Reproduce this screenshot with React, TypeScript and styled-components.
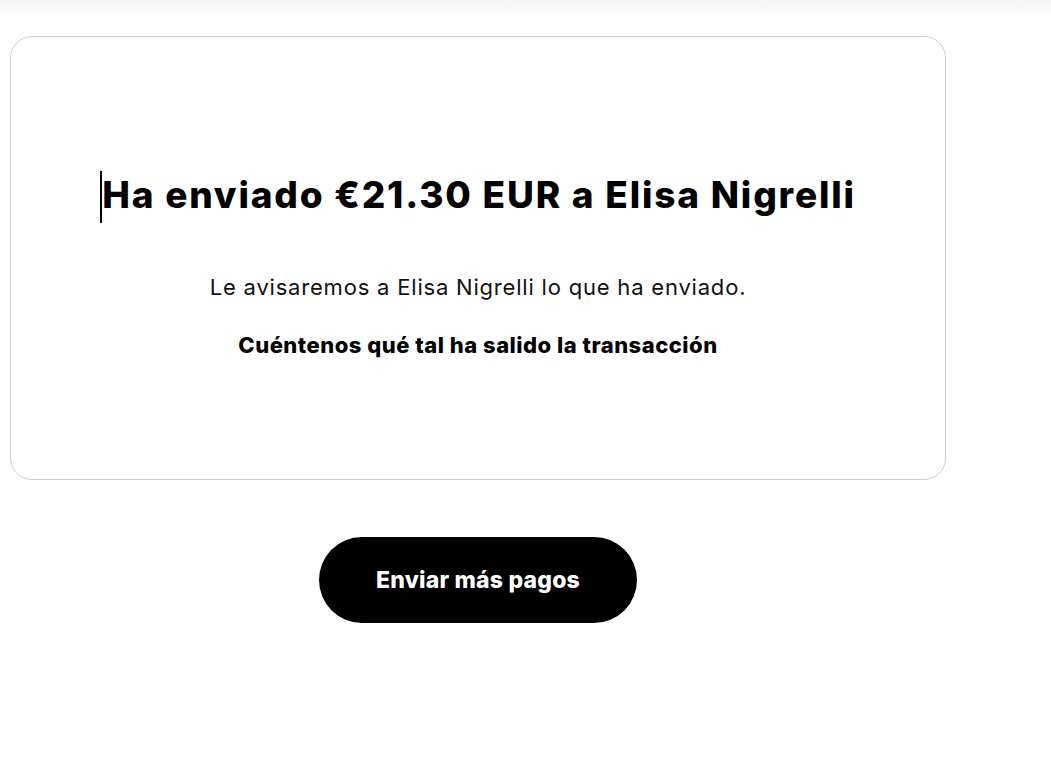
import React from "react";
import styled, { createGlobalStyle } from "styled-components";

const Global = createGlobalStyle`
  html, body { margin: 0; padding: 0; background: #ffffff; }
  body { font-family: "Liberation Sans", Arial, sans-serif; color: #000; }
`;

const Page = styled.div`
  width: 1051px;
  min-height: 771px;
  background: linear-gradient(#f7f7f7 0px, #fafafa 10px, #ffffff 16px, #ffffff 100%);
  padding-top: 36px;
  box-sizing: border-box;
`;

const Column = styled.main`
  width: 936px;
  margin-left: 10px;
  display: flex;
  flex-direction: column;
  align-items: center;
`;

const Card = styled.section`
  box-sizing: border-box;
  width: 936px;
  height: 444px;
  border: 1px solid #cfcfcf;
  border-radius: 22px;
  background: #fff;
  padding-top: 130px;
  display: flex;
  flex-direction: column;
  align-items: center;
`;

const Title = styled.h1`
  margin: 0;
  font-family: "Inter", "Lato", sans-serif;
  font-weight: 800;
  font-size: 37px;
  line-height: 48px;
  letter-spacing: 1.8px;
  color: #000;
  display: flex;
  align-items: center;
  white-space: nowrap;
`;

const Caret = styled.span`
  display: inline-block;
  width: 2px;
  height: 52px;
  background: #000;
  margin-top: 4px;
`;

const Sub = styled.p`
  margin: 50px 0 0;
  font-family: "Inter", "Liberation Sans", Arial, sans-serif;
  font-weight: 400;
  font-size: 22px;
  line-height: 28px;
  letter-spacing: 0.8px;
  color: #111;
`;

const Prompt = styled.p`
  margin: 30px 0 0;
  font-family: "Inter", "Lato", sans-serif;
  font-weight: 800;
  font-size: 22px;
  line-height: 28px;
  letter-spacing: 0.5px;
  color: #000;
`;

const PrimaryButton = styled.button`
  margin-top: 57px;
  width: 318px;
  height: 86px;
  border: none;
  border-radius: 43px;
  background: #000;
  color: #fff;
  font-family: "Inter", "Lato", sans-serif;
  font-weight: 800;
  font-size: 23px;
  letter-spacing: 0.2px;
  cursor: pointer;
`;

export default function App() {
  return (
    <Page>
      <Global />
      <Column>
        <Card>
          <Title>
            <Caret />
            Ha enviado €21.30 EUR a Elisa Nigrelli
          </Title>
          <Sub>Le avisaremos a Elisa Nigrelli lo que ha enviado.</Sub>
          <Prompt>Cuéntenos qué tal ha salido la transacción</Prompt>
        </Card>
        <PrimaryButton>Enviar más pagos</PrimaryButton>
      </Column>
    </Page>
  );
}
